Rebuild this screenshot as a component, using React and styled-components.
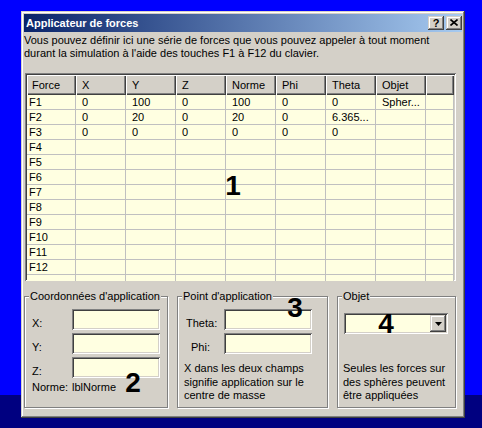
import React from 'react';
import styled, { createGlobalStyle } from 'styled-components';

const Global = createGlobalStyle`
  html, body { margin: 0; padding: 0; height: 100%; }
  body {
    background: linear-gradient(to bottom, #0000ff 0, #0000ff 395px, #000080 395px, #000080 100%);
    font-family: "Liberation Sans", Arial, sans-serif;
    font-size: 11px;
    color: #000;
  }
  #root { height: 100%; }
`;

const Desktop = styled.div`
  padding: 11px 0 0 21px;
`;

const raised = `
  box-shadow: inset -1px -1px #404040, inset 1px 1px #d4d0c8, inset -2px -2px #808080, inset 2px 2px #fff;
`;
const sunken = `
  box-shadow: inset 1px 1px #808080, inset -1px -1px #fff, inset 2px 2px #404040, inset -2px -2px #d4d0c8;
`;

const Window = styled.div`
  position: relative;
  box-sizing: border-box;
  width: 444px;
  height: 407px;
  padding: 3px;
  background: #d4d0c8;
  ${raised}
  display: flex;
  flex-direction: column;
`;

const TitleBar = styled.div`
  height: 18px;
  display: flex;
  align-items: center;
  padding-left: 2px;
  background: linear-gradient(to right, #0a246a, #a6caf0);
  color: #fff;
  font-weight: bold;
  font-size: 11px;
`;

const TitleText = styled.span`
  flex: 1;
  white-space: nowrap;
`;

const TitleButtons = styled.div`
  display: flex;
  gap: 2px;
`;

const TitleButton = styled.div`
  box-sizing: border-box;
  width: 16px;
  height: 14px;
  background: #d4d0c8;
  ${raised}
  display: flex;
  align-items: center;
  justify-content: center;
  color: #000;
  font-weight: bold;
  font-size: 11px;
  line-height: 14px;
  padding-bottom: 1px;
`;

const Description = styled.div`
  margin-top: 2px;
  line-height: 13px;
  white-space: nowrap;
`;

const TableFrame = styled.div`
  box-sizing: border-box;
  margin: 13px 0 0 1px;
  width: 431px;
  height: 208px;
  padding: 2px;
  ${sunken}
  overflow: hidden;
`;

const Grid = styled.div`
  display: grid;
  grid-template-columns: 49px repeat(7, 50px) 1fr;
  grid-template-rows: 20px;
  grid-auto-rows: 15px;
`;

const HeadCell = styled.div`
  box-sizing: border-box;
  height: 20px;
  background: #d4d0c8;
  box-shadow: inset 1px 1px #fff, inset -1px -1px #404040, inset -2px -2px #808080;
  padding-left: ${p => (p.first ? 5 : 6)}px;
  line-height: 20px;
  white-space: nowrap;
  overflow: hidden;
`;

const Cell = styled.div`
  box-sizing: border-box;
  height: 15px;
  background: #ffffe1;
  border-right: 1px solid #c0c0c0;
  border-bottom: 1px solid #c0c0c0;
  padding-left: ${p => (p.first ? 2 : 6)}px;
  line-height: 14px;
  white-space: nowrap;
  overflow: hidden;
`;

const GroupRow = styled.div`
  display: flex;
  gap: 9px;
  margin-top: 9px;
  height: 118px;
`;

const GroupBox = styled.fieldset`
  box-sizing: border-box;
  margin: 0;
  padding: 0;
  min-width: 0;
  width: ${p => p.w}px;
  height: 118px;
  border: 1px solid #808080;
  box-shadow: 1px 1px 0 #fff, inset 1px 1px 0 #fff;
`;

const Legend = styled.legend`
  margin-left: 4px;
  padding: 0 1px;
  line-height: 13px;
  font-size: 11px;
  background: #d4d0c8;
`;

const FormGrid = styled.div`
  display: grid;
  grid-template-columns: ${p => p.labelW}px 88px;
  grid-auto-rows: 21px;
  row-gap: 3px;
  padding: 6px 0 0 ${p => p.pl}px;
`;

const Label = styled.div`
  padding-top: 8px;
  padding-left: ${p => p.indent || 0}px;
  line-height: 13px;
  white-space: nowrap;
`;

const Field = styled.div`
  box-sizing: border-box;
  width: 88px;
  height: 21px;
  background: #ffffe1;
  ${sunken}
`;

const InfoText = styled.div`
  line-height: 13px;
  white-space: nowrap;
`;

const Note = styled.div`
  grid-column: 1 / -1;
  margin-top: ${p => p.mt}px;
  padding-left: ${p => p.pl || 0}px;
  line-height: 13.5px;
  white-space: nowrap;
`;

const ObjetBody = styled.div`
  padding: 10px 0 0 5px;
`;

const Combo = styled.div`
  box-sizing: border-box;
  margin-left: 1px;
  width: 104px;
  height: 21px;
  padding: 2px;
  background: #ffffe1;
  ${sunken}
  display: flex;
  justify-content: flex-end;
`;

const DropButton = styled.div`
  box-sizing: border-box;
  width: 16px;
  height: 17px;
  background: #d4d0c8;
  ${raised}
  display: flex;
  align-items: center;
  justify-content: center;
`;

const Marker = styled.div`
  position: absolute;
  left: ${p => p.x}px;
  top: ${p => p.y}px;
  width: 20px;
  text-align: center;
  font-family: "Liberation Sans", Arial, sans-serif;
  font-weight: bold;
  font-size: 28px;
  line-height: 28px;
  color: #000;
  pointer-events: none;
`;

const headers = ['Force', 'X', 'Y', 'Z', 'Norme', 'Phi', 'Theta', 'Objet', ''];
const data = [
  ['F1', '0', '100', '0', '100', '0', '0', 'Spher...', ''],
  ['F2', '0', '20', '0', '20', '0', '6.365...', '', ''],
  ['F3', '0', '0', '0', '0', '0', '0', '', ''],
  ...[4, 5, 6, 7, 8, 9, 10, 11, 12].map(n => [`F${n}`, '', '', '', '', '', '', '', '']),
  ['', '', '', '', '', '', '', '', ''],
];

export default function App() {
  return (
    <>
      <Global />
      <Desktop>
        <Window>
          <TitleBar>
            <TitleText>Applicateur de forces</TitleText>
            <TitleButtons>
              <TitleButton>?</TitleButton>
              <TitleButton>
                <svg width="8" height="7" viewBox="0 0 8 7">
                  <path d="M0.5 0.5 L7.5 6.5 M7.5 0.5 L0.5 6.5" stroke="#000" strokeWidth="1.6" fill="none" />
                </svg>
              </TitleButton>
            </TitleButtons>
          </TitleBar>

          <Description>
            Vous pouvez définir ici une série de forces que vous pouvez appeler à tout moment
            <br />
            durant la simulation à l'aide des touches F1 à F12 du clavier.
          </Description>

          <TableFrame>
            <Grid>
              {headers.map((h, i) => (
                <HeadCell key={'h' + i} first={i === 0}>{h}</HeadCell>
              ))}
              {data.map((row, r) =>
                row.map((v, c) => (
                  <Cell key={r + '-' + c} first={c === 0}>{v}</Cell>
                ))
              )}
            </Grid>
          </TableFrame>

          <GroupRow>
            <GroupBox w={144}>
              <Legend>Coordonnées d'application</Legend>
              <FormGrid labelW={40} pl={7}>
                <Label>X:</Label>
                <Field />
                <Label>Y:</Label>
                <Field />
                <Label>Z:</Label>
                <Field />
                <InfoText>Norme:</InfoText>
                <InfoText>lblNorme</InfoText>
              </FormGrid>
            </GroupBox>

            <GroupBox w={151}>
              <Legend>Point d'application</Legend>
              <FormGrid labelW={40} pl={6}>
                <Label indent={2}>Theta:</Label>
                <Field />
                <Label indent={7}>Phi:</Label>
                <Field />
                <Note mt={5}>
                  X dans les deux champs
                  <br />
                  signifie application sur le
                  <br />
                  centre de masse
                </Note>
              </FormGrid>
            </GroupBox>

            <GroupBox w={119}>
              <Legend>Objet</Legend>
              <ObjetBody>
                <Combo>
                  <DropButton>
                    <svg width="7" height="4" viewBox="0 0 7 4">
                      <polygon points="0,0 7,0 3.5,4" fill="#000" />
                    </svg>
                  </DropButton>
                </Combo>
                <Note mt={28}>
                  Seules les forces sur
                  <br />
                  des sphères peuvent
                  <br />
                  être appliquées
                </Note>
              </ObjetBody>
            </GroupBox>
          </GroupRow>

          <Marker x={202} y={161}>1</Marker>
          <Marker x={102} y={358}>2</Marker>
          <Marker x={264} y={283}>3</Marker>
          <Marker x={355} y={299}>4</Marker>
        </Window>
      </Desktop>
    </>
  );
}
